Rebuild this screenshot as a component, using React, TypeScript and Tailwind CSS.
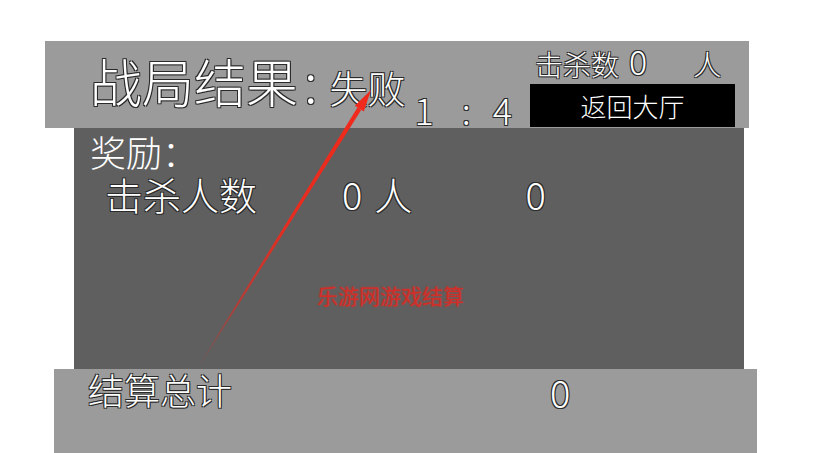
const outline =
  'text-white [text-shadow:-1px_-1px_0_#2a2a2a,1px_-1px_0_#2a2a2a,-1px_1px_0_#2a2a2a,1px_1px_0_#2a2a2a]'

function Arrow() {
  return (
    <svg
      className="pointer-events-none absolute left-0 top-0"
      width={814}
      height={453}
      viewBox="0 0 814 453"
    >
      <defs>
        <linearGradient id="beam" gradientUnits="userSpaceOnUse" x1="198" y1="367" x2="359" y2="108">
          <stop offset="0" stopColor="#e8281e" stopOpacity="0" />
          <stop offset="0.25" stopColor="#e8281e" stopOpacity="0.65" />
          <stop offset="0.55" stopColor="#ee2a1c" stopOpacity="0.95" />
          <stop offset="1" stopColor="#f02a1c" stopOpacity="1" />
        </linearGradient>
      </defs>
      <polygon points="197.6,367.2 198.6,367.6 361.2,110 357.4,107.4" fill="url(#beam)" />
      <polygon points="371,90 354.8,105.8 363.8,111.4" fill="#f02a1c" />
    </svg>
  )
}

export default function App() {
  return (
    <div className="relative h-[453px] w-[814px] overflow-hidden whitespace-nowrap bg-white font-['Noto_Sans_CJK_SC',sans-serif] font-light">
      {/* header */}
      <div className="ml-[45px] mt-[41px] flex h-[87px] w-[704px] items-start bg-[#9b9b9b] pl-[45px]">
        <span className={`mt-[14px] shrink-0 text-[52px] leading-none ${outline}`}>战局结果</span>
        <span className={`ml-[6px] mr-[12px] mt-[12px] shrink-0 text-[54px] leading-none ${outline}`}>:</span>
        <span className={`mt-[27px] shrink-0 text-[38px] leading-none ${outline}`}>失败</span>
        <span className={`ml-[9px] mt-[50px] flex shrink-0 text-[36px] leading-none ${outline}`}>
          <span>1</span>
          <span className="ml-[28px]">:</span>
          <span className="ml-[22px]">4</span>
        </span>
        <div className="ml-auto mr-[14px] flex w-[205px] shrink-0 flex-col">
          <div className={`mt-[9px] flex h-[28px] items-end pl-[5px] text-[28px] leading-none ${outline}`}>
            <span>击杀数</span>
            <span className="ml-[10px] text-[34px] leading-none">0</span>
            <span className="ml-[46px]">人</span>
          </div>
          <button
            type="button"
            className="mt-[6px] flex h-[43px] items-center justify-center bg-black text-[26px] leading-none text-white"
          >
            返回大厅
          </button>
        </div>
      </div>

      {/* rewards */}
      <div className="ml-[74px] h-[241px] w-[670px] bg-[#5f5f5f] pt-[5px]">
        <div className="pl-[16px] text-[36px] leading-none text-white">奖励：</div>
        <div className={`mt-[6px] flex pl-[31px] text-[38px] leading-none ${outline}`}>
          <span>击杀人数</span>
          <span className="ml-[85px]">0</span>
          <span className="ml-[12px]">人</span>
          <span className="ml-[113px]">0</span>
        </div>
        <div className="mt-[72px] pl-[243px] text-[21px] font-normal leading-none text-[#d02e28] [text-shadow:0_0_2px_rgba(220,50,40,0.8)]">
          乐游网游戏结算
        </div>
      </div>

      {/* total */}
      <div className={`ml-[54px] flex h-[84px] w-[703px] bg-[#9b9b9b] pl-[34px] text-[36px] leading-none ${outline}`}>
        <span className="mt-[2px]">结算总计</span>
        <span className="ml-[318px] mt-[4px] text-[38px]">0</span>
      </div>

      <Arrow />
    </div>
  )
}
